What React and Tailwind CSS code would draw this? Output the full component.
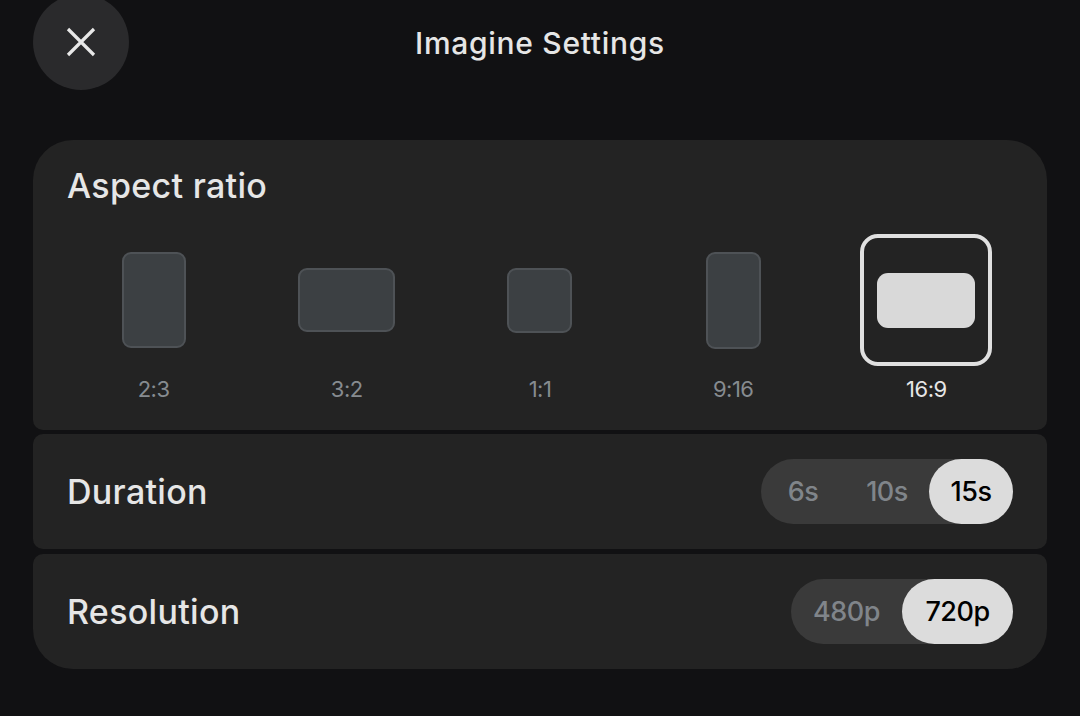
import React, { useState } from 'react'

const RATIOS = [
  { label: '2:3', box: 'w-[64px] h-[96px]' },
  { label: '3:2', box: 'w-[97px] h-[64px]' },
  { label: '1:1', box: 'w-[65px] h-[65px]' },
  { label: '9:16', box: 'w-[55px] h-[97px]' },
  { label: '16:9', box: 'w-[98px] h-[55px]' },
]

function Segmented({ options, value, onChange, itemClass }) {
  return (
    <div className="flex items-center h-[65px] rounded-full bg-[#3a3a3a]">
      {options.map(o => (
        <button
          key={o}
          onClick={() => onChange(o)}
          className={`h-full pt-[2px] rounded-full text-[27px] font-medium tracking-[-0.5px] ${itemClass} ${
            value === o ? 'bg-[#dcdcdc] text-black' : 'text-[#80858a]'
          }`}
        >
          {o}
        </button>
      ))}
    </div>
  )
}

export default function App() {
  const [ratio, setRatio] = useState('16:9')
  const [duration, setDuration] = useState('15s')
  const [resolution, setResolution] = useState('720p')

  return (
    <div className="w-[1080px] h-[716px] bg-[#111113] overflow-hidden text-[#e6e6e6] font-['Inter',sans-serif]">
      {/* Header */}
      <div className="grid grid-cols-[1fr_auto_1fr] items-center h-[90px] px-[33px]">
        <button className="w-[96px] h-[96px] -mt-[6px] rounded-full bg-[#2a2a2c] flex items-center justify-center">
          <svg width="30" height="30" viewBox="0 0 30 30" fill="none" stroke="#e8e8e8" strokeWidth="3.2">
            <path d="M2 2 L28 28 M28 2 L2 28" />
          </svg>
        </button>
        <h1 className="text-[30px] font-medium tracking-[0.7px] -mt-[4px]">Imagine Settings</h1>
        <div />
      </div>

      <div className="mx-[33px] mt-[50px]">
        {/* Aspect ratio */}
        <div className="h-[290px] bg-[#232323] rounded-t-[40px] rounded-b-[10px] pt-[26px]">
          <div className="px-[34px] text-[34px] font-medium leading-[40px] tracking-[0.3px]">Aspect ratio</div>
          <div className="grid grid-cols-5 px-[24px] mt-[28px]">
            {RATIOS.map(r => {
              const active = ratio === r.label
              return (
                <button key={r.label} onClick={() => setRatio(r.label)} className="flex flex-col items-center">
                  <div
                    className={`w-[132px] h-[132px] rounded-[18px] flex items-center justify-center ${
                      active ? 'border-[4px] border-[#e0e0e0]' : ''
                    }`}
                  >
                    <div
                      className={`${r.box} ${
                        active
                          ? 'bg-[#d9d9d9] rounded-[11px]'
                          : 'bg-[#3c4043] border-2 border-[#4e5256] rounded-[9px]'
                      }`}
                    />
                  </div>
                  <div
                    className={`mt-[9px] text-[22px] leading-[28px] tracking-[-0.5px] ${
                      active ? 'text-[#e6e6e6]' : 'text-[#868b90]'
                    }`}
                  >
                    {r.label}
                  </div>
                </button>
              )
            })}
          </div>
        </div>

        {/* Duration */}
        <div className="mt-[4px] h-[115px] bg-[#232323] rounded-[10px] flex items-center justify-between pl-[34px] pr-[34px]">
          <span className="text-[34px] font-medium tracking-[0.3px]">Duration</span>
          <Segmented
            options={['6s', '10s', '15s']}
            value={duration}
            onChange={setDuration}
            itemClass="w-[84px]"
          />
        </div>

        {/* Resolution */}
        <div className="mt-[5px] h-[115px] bg-[#232323] rounded-t-[10px] rounded-b-[40px] flex items-center justify-between pl-[34px] pr-[34px]">
          <span className="text-[34px] font-medium tracking-[0.3px]">Resolution</span>
          <Segmented
            options={['480p', '720p']}
            value={resolution}
            onChange={setResolution}
            itemClass="w-[111px]"
          />
        </div>
      </div>
    </div>
  )
}
